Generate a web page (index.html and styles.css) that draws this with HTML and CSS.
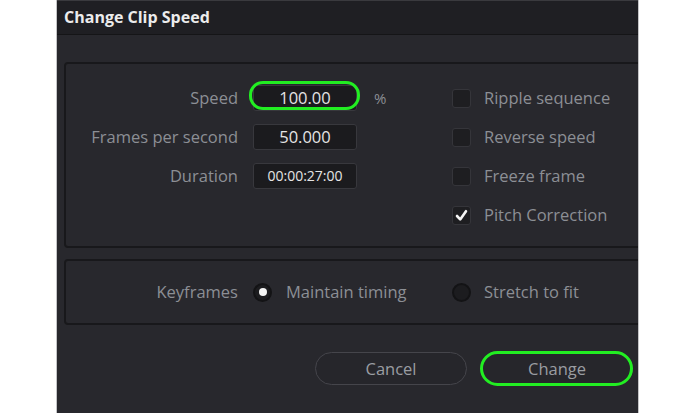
FILE: index.html
```html
<!DOCTYPE html>
<html>
<head>
<meta charset="utf-8">
<link rel="stylesheet" href="styles.css">
</head>
<body>
<div class="dialog">
  <div class="titlebar">Change Clip Speed</div>
  <div class="content">
    <div class="panel panel-speed">
      <div class="fields">
        <div class="label">Speed</div>
        <div class="field-wrap">
          <div class="input">100.00</div>
          <span class="ring ring-speed"></span>
        </div>
        <div class="unit">%</div>

        <div class="label">Frames per second</div>
        <div class="input">50.000</div>
        <div class="unit"></div>

        <div class="label">Duration</div>
        <div class="input input-small">00:00:27:00</div>
        <div class="unit"></div>
      </div>
      <div class="options">
        <div class="option"><span class="checkbox"></span><span class="opt-label">Ripple sequence</span></div>
        <div class="option"><span class="checkbox"></span><span class="opt-label">Reverse speed</span></div>
        <div class="option"><span class="checkbox"></span><span class="opt-label">Freeze frame</span></div>
        <div class="option"><span class="checkbox"><svg width="19" height="19" viewBox="0 0 19 19"><path d="M5 10 L8.2 13.4 L14 5.2" fill="none" stroke="#f4f4f4" stroke-width="2.6" stroke-linecap="round" stroke-linejoin="round"/></svg></span><span class="opt-label">Pitch Correction</span></div>
      </div>
    </div>

    <div class="panel panel-keys">
      <div class="label">Keyframes</div>
      <div class="radio-group first">
        <span class="radio checked"></span>
        <span class="opt-label">Maintain timing</span>
      </div>
      <div class="radio-group">
        <span class="radio"></span>
        <span class="opt-label">Stretch to fit</span>
      </div>
    </div>

    <div class="actions">
      <button class="btn">Cancel</button>
      <button class="btn btn-primary">Change<span class="ring ring-btn"></span></button>
    </div>
  </div>
</div>
</body>
</html>
```

FILE: styles.css
```css
html, body {
  margin: 0;
  padding: 0;
  background: #ffffff;
}

body {
  font-family: "Open Sans", "Noto Sans", sans-serif;
  width: 700px;
  height: 413px;
  overflow: hidden;
}

.dialog {
  margin-left: 56px;
  width: 581px;
  height: 413px;
  border-left: 1px solid #c4c4c6;
  border-right: 1px solid #c4c4c6;
  background: #28282d;
  overflow: hidden;
  display: flex;
  flex-direction: column;
}

.titlebar {
  height: 35px;
  flex: none;
  box-sizing: border-box;
  background: #1f1f23;
  border-top: 1px solid #3a3a3e;
  border-bottom: 1px solid #151517;
  padding-left: 7px;
  padding-top: 5px;
  color: #ececec;
  font-weight: 700;
  font-size: 16px;
  line-height: 22px;
}

.content {
  padding-left: 7px;
  padding-top: 27px;
  display: flex;
  flex-direction: column;
}

.panel {
  width: 600px;
  border: 2px solid #18181b;
  border-radius: 4px;
  box-sizing: border-box;
}

.panel-speed {
  height: 186px;
  padding-top: 21px;
  display: flex;
}

.fields {
  display: grid;
  grid-template-columns: 172px 104px 78px;
  column-gap: 15px;
  row-gap: 13px;
  grid-auto-rows: 26px;
  align-items: center;
}

.fields .unit {
  padding-left: 2px;
  color: #8c8f95;
  font-size: 15px;
}

.label {
  text-align: right;
  color: #8c8f95;
  font-size: 16.5px;
  line-height: 26px;
  white-space: nowrap;
}

.field-wrap {
  position: relative;
  height: 26px;
}

.input {
  height: 26px;
  box-sizing: border-box;
  background: #1b1b1e;
  border: 1px solid #38383d;
  border-radius: 3px;
  color: #e4e4e4;
  font-size: 16.5px;
  line-height: 24px;
  text-align: center;
}

.input-small {
  font-size: 14px;
}

.ring {
  position: absolute;
  border: 3px solid #22ee22;
  box-sizing: border-box;
  pointer-events: none;
}

.ring-speed {
  left: -4px;
  top: -4px;
  width: 111px;
  height: 29px;
  border-radius: 14px;
}

.options {
  margin-left: 2px;
  display: flex;
  flex-direction: column;
  gap: 13px;
}

.option {
  height: 26px;
  display: flex;
  align-items: center;
  gap: 13px;
}

.checkbox {
  width: 19px;
  height: 19px;
  box-sizing: border-box;
  background: #1e1e21;
  border: 1px solid #35353a;
  border-radius: 3px;
  display: flex;
  align-items: center;
  justify-content: center;
}

.checkbox svg {
  display: block;
  margin: -1px;
}

.opt-label {
  color: #8c8f95;
  font-size: 16.5px;
  line-height: 26px;
  white-space: nowrap;
}

.panel-keys {
  margin-top: 11px;
  height: 66px;
  display: flex;
  align-items: center;
}

.panel-keys .label {
  width: 172px;
  flex: none;
}

.radio-group {
  display: flex;
  align-items: center;
  gap: 13px;
}

.radio-group.first {
  margin-left: 15px;
  width: 199px;
  flex: none;
  gap: 14px;
}

.radio {
  width: 19px;
  height: 19px;
  box-sizing: border-box;
  border-radius: 50%;
  background: #1c1c1f;
  border: 2px solid #131315;
  display: flex;
  align-items: center;
  justify-content: center;
}

.radio.checked::after {
  content: "";
  width: 8px;
  height: 8px;
  border-radius: 50%;
  background: #f4f4f4;
}

.actions {
  margin-top: 27px;
  padding-left: 251px;
  display: flex;
  gap: 14px;
}

.btn {
  position: relative;
  width: 152px;
  height: 33px;
  border-radius: 17px;
  border: 1px solid #45454b;
  background: #26262b;
  color: #9a9da2;
  font-family: "Open Sans", "Noto Sans", sans-serif;
  font-size: 16.5px;
  padding: 0;
  line-height: 30px;
}

.ring-btn {
  left: -2px;
  top: -2px;
  right: -1px;
  bottom: -2px;
  border-radius: 18px;
}
```
